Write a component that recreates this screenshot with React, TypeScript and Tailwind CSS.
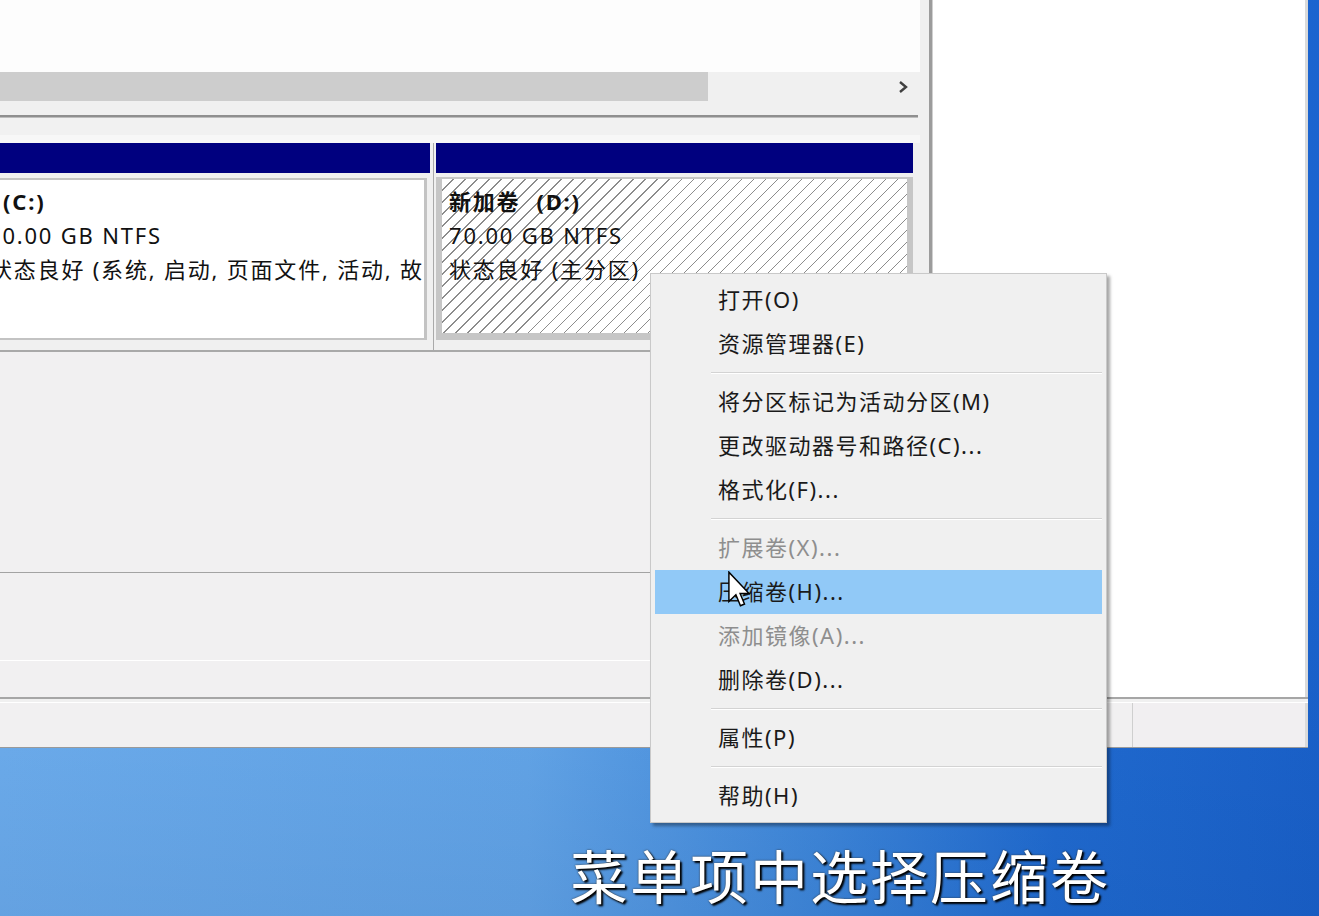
import React from 'react';

const uiFont = "font-['Noto_Sans','Noto_Sans_CJK_SC',sans-serif]";

type MenuEntry =
  | { type: 'item'; label: string; disabled?: boolean; active?: boolean }
  | { type: 'sep' };

const menuEntries: MenuEntry[] = [
  { type: 'item', label: '打开(O)' },
  { type: 'item', label: '资源管理器(E)' },
  { type: 'sep' },
  { type: 'item', label: '将分区标记为活动分区(M)' },
  { type: 'item', label: '更改驱动器号和路径(C)...' },
  { type: 'item', label: '格式化(F)...' },
  { type: 'sep' },
  { type: 'item', label: '扩展卷(X)...', disabled: true },
  { type: 'item', label: '压缩卷(H)...', active: true },
  { type: 'item', label: '添加镜像(A)...', disabled: true },
  { type: 'item', label: '删除卷(D)...' },
  { type: 'sep' },
  { type: 'item', label: '属性(P)' },
  { type: 'sep' },
  { type: 'item', label: '帮助(H)' },
];

/**
 * Right-click menu for the selected volume
 */
const ContextMenu: React.FC = () => (
  <div
    className={`absolute left-[650px] top-[273px] w-[457px] bg-[#f0f0f0] border border-[#c9c9c9] pt-[4px] pb-[4px] px-[4px] shadow-[3px_3px_3px_rgba(0,0,0,0.35)] ${uiFont}`}
  >
    {menuEntries.map((entry, i) =>
      entry.type === 'sep' ? (
        <div key={i} className="h-[14px] flex flex-col justify-center pl-[56px]">
          <div className="h-px bg-[#d3d3d3]" />
          <div className="h-px bg-white" />
        </div>
      ) : (
        <div
          key={i}
          className={`
            h-[44px] pl-[63px] pb-[2px] flex items-center text-[22px] tracking-[1.5px]
            ${entry.active ? 'bg-[#91c9f7]' : ''}
            ${entry.disabled ? 'text-[#8e8e8e]' : 'text-[#1a1a1a]'}
          `}
        >
          {entry.label}
        </div>
      )
    )}
  </div>
);

const Cursor: React.FC = () => (
  <svg
    className="absolute left-[728px] top-[571px]"
    width="22"
    height="38"
    viewBox="0 0 12 20.5"
  >
    <path
      d="M0.5 0.5 L0.5 16.5 L4.3 12.8 L6.8 18.8 L9 17.9 L6.6 12.2 L11.5 12.2 Z"
      fill="#ffffff"
      stroke="#000000"
      strokeWidth="0.8"
      strokeLinejoin="miter"
    />
  </svg>
);

/**
 * Left pane: volume list scroll bar and graphical disk view
 */
const LeftPane: React.FC = () => (
  <div className={`w-[920px] flex flex-col ${uiFont}`}>
    <div className="h-[72px] bg-[#fdfdfd]" />
    {/* horizontal scroll bar */}
    <div className="h-[29px] flex items-stretch bg-[#f0f0f0]">
      <div className="w-[708px] bg-[#cdcdcd]" />
      <div className="flex-1" />
      <div className="w-[22px] mr-[6px] flex items-center justify-center">
        <svg width="12" height="14" viewBox="0 0 12 14">
          <polyline points="3,2 9,7 3,12" fill="none" stroke="#404040" strokeWidth="2.4" />
        </svg>
      </div>
    </div>
    <div className="h-[14px] bg-[#f0f0f0]" />
    <div className="h-[3px] w-[918px] bg-[#8f8f8f] border-b border-[#bdbdbd]" />
    <div className="h-[25px] bg-[#f1f1f1] flex flex-col justify-end">
      <div className="h-[8px] bg-[#f7f7f7]" />
    </div>

    {/* disk partitions */}
    <div className="h-[207px] flex bg-[#f0f0f0]">
      <div className="w-[430px] flex flex-col">
        <div className="h-[30px] bg-[#00007f]" />
        <div className="h-[5px]" />
        <div className="h-[162px] w-[427px] bg-white border-t-2 border-r-[3px] border-b-2 border-[#c3c3c3] overflow-hidden pt-[4px] text-[22px] leading-[34px] tracking-[1.8px] text-[#111]">
          <div className="pl-[3px] font-bold whitespace-nowrap">(C:)</div>
          <div className="-ml-[12px] whitespace-nowrap">70.00 GB NTFS</div>
          <div className="-ml-[10px] whitespace-nowrap">
            状态良好 (系统, 启动, 页面文件, 活动, 故障转储, 主分区)
          </div>
        </div>
      </div>
      <div className="w-[6px] flex justify-center">
        <div className="w-px bg-[#aaaaaa]" />
      </div>
      <div className="w-[477px] flex flex-col">
        <div className="h-[30px] bg-[#00007f]" />
        <div className="h-[4px]" />
        <div className="h-[163px] bg-[#c6c6c6] pt-[2px] pl-[6px] pr-[6px] pb-[7px]">
          <div className="h-full bg-[repeating-linear-gradient(135deg,#ffffff_0px,#ffffff_7.5px,#8c8c8c_7.5px,#8c8c8c_8.5px)] pt-[5px] pl-[7px] text-[22px] leading-[34px] tracking-[1.8px] text-[#111]">
            <div className="font-bold">
              <span>新加卷</span>
              <span className="ml-[16px]">(D:)</span>
            </div>
            <div>70.00 GB NTFS</div>
            <div>状态良好 (主分区)</div>
          </div>
        </div>
      </div>
    </div>

    <div className="h-[2px] bg-[#a9a9a9]" />
    <div className="h-[220px] bg-[#f1f0f1]" />
    <div className="h-px bg-[#a3a3a3]" />
    <div className="h-[87px] bg-[#f1f0f1]" />
    <div className="h-px bg-white" />
    <div className="flex-1 bg-[#f1f0f1]" />
  </div>
);

export default function App() {
  return (
    <div className="relative w-[1319px] h-[916px] overflow-hidden bg-[linear-gradient(180deg,rgba(0,0,0,0)_55%,rgba(0,30,90,0.12)_100%),linear-gradient(90deg,#72b4f4_0%,#68acef_40%,#428de1_62%,#226fd6_80%,#1b64cf_100%)]">
      {/* Disk Management window */}
      <div className="w-[1308px] h-[748px] flex flex-col bg-[#f0f0f0]">
        <div className="h-[697px] flex">
          <LeftPane />
          <div className="w-[9px] bg-[#f0f0f0]" />
          <div className="w-[4px] bg-[#9c9c9c] border-r border-[#d0d0d0]" />
          <div className="flex-1 bg-white border-r-[3px] border-[#dadada]" />
        </div>
        {/* status bar */}
        <div className="flex-1 flex flex-col border-t-2 border-[#a6a6a6]">
          <div className="h-px bg-white mt-[3px]" />
          <div className="flex-1 flex border-b border-[#9a9a9a]">
            <div className="w-[1133px] border-r border-[#cfcfcf] bg-[#f1f0f1]" />
            <div className="flex-1 bg-[#f1eff1] border-r-[3px] border-[#dadada]" />
          </div>
        </div>
      </div>

      {/* subtitle */}
      <div className="pl-[570px] pt-[97px]">
        <div className="font-['Noto_Sans_CJK_SC',sans-serif] text-[58px] leading-none tracking-[2px] text-white [text-shadow:2px_2px_2px_#000,0_0_2px_#333]">
          菜单项中选择压缩卷
        </div>
      </div>

      <ContextMenu />
      <Cursor />
    </div>
  );
}
